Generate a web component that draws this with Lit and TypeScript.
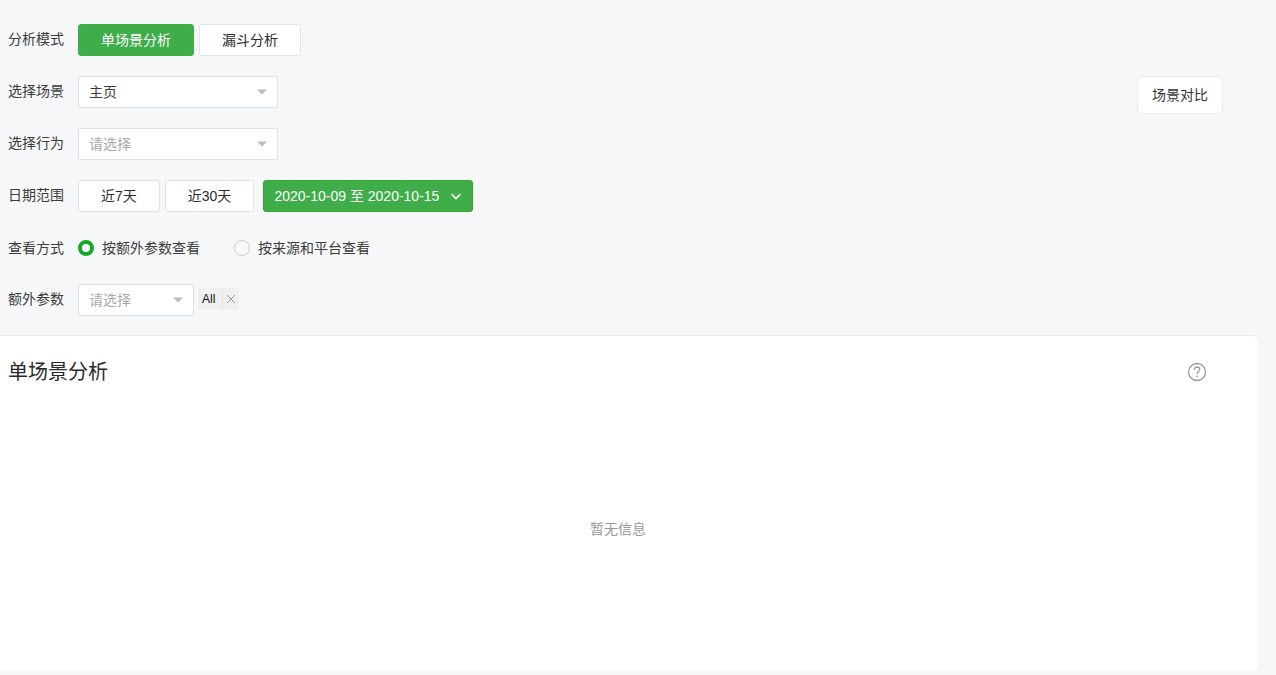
import { LitElement, html, css } from "lit";
import { customElement, property, state } from "lit/decorators.js";

@customElement("app-root")
export class AppRoot extends LitElement {
  @property({ type: String }) mode = "single";
  @state() private view = "extra";
  @state() private tags = ["All"];

  static styles = css`
    :host {
      display: block;
      box-sizing: border-box;
      min-height: 100vh;
      padding: 24px 18px 5px 0;
      background: #f5f7f9;
      color: #3c3c3c;
      font: 14px/20px "Liberation Sans", "Noto Sans CJK SC", sans-serif;
    }
    *, *::before, *::after { box-sizing: border-box; }
    button, select { font: inherit; margin: 0; }
    .top {
      display: flex;
      justify-content: space-between;
      align-items: flex-start;
      padding: 0 35px 19px 8px;
    }
    .filters { display: flex; flex-direction: column; gap: 20px; }
    .row { display: flex; align-items: center; gap: 14px; height: 32px; }
    .label { width: 56px; padding-bottom: 3px; white-space: nowrap; }
    .row.radios .label { padding-bottom: 0; }
    .group { display: flex; align-items: center; gap: 5px; }
    .group.params { gap: 4px; }
    .btn {
      height: 32px;
      padding: 0 22px;
      border: 1px solid #dfe3e8;
      border-radius: 3px;
      background: #fff;
      color: #2a2a2a;
      white-space: nowrap;
      cursor: pointer;
    }
    .btn.on { background: #3fad4a; border-color: #3fad4a; color: #fff; }
    .btn.date {
      display: flex;
      align-items: center;
      gap: 11px;
      margin-left: 4px;
      padding: 0 10px;
      border-color: #38ab2e;
    }
    .compare {
      height: 38px;
      margin-top: 52px;
      padding: 0 14px 1px;
      border: 1px solid #e8ebee;
      border-radius: 4px;
      background: #fff;
      color: #333;
      cursor: pointer;
    }
    .select { display: grid; align-items: center; width: 200px; }
    .select.small { width: 116px; }
    .select > * { grid-area: 1 / 1; }
    .select svg { justify-self: end; margin-right: 10px; pointer-events: none; }
    select {
      appearance: none;
      width: 100%;
      height: 32px;
      padding: 0 28px 0 10px;
      border: 1px solid #dce2e6;
      border-radius: 2px;
      background: #fff;
      color: #3c3c3c;
    }
    select.empty { color: #aaa; }
    .options { display: flex; gap: 34px; }
    .option { display: flex; align-items: center; gap: 8px; }
    .option input {
      appearance: none;
      width: 16px;
      height: 16px;
      margin: 0;
      border: 1px solid #ccc;
      border-radius: 50%;
      background: #f8f9fa;
    }
    .option input:checked { border: 4px solid #1aa52b; background: #fff; }
    .tag {
      display: flex;
      align-items: center;
      height: 22px;
      margin-bottom: 2px;
      padding-left: 4px;
      background: #f0f0f0;
      color: #111;
      font-size: 12px;
    }
    .tag button {
      display: flex;
      align-items: center;
      justify-content: center;
      width: 17px;
      height: 16px;
      margin-left: 7px;
      padding: 0;
      border: 0;
      border-left: 1px solid #e2e2e2;
      background: none;
      cursor: pointer;
    }
    .panel {
      display: flex;
      flex-direction: column;
      min-height: calc(100vh - 340px);
      padding: 21px 30px 20px 8px;
      border-top: 1px solid #e6e9ec;
      border-radius: 0 5px 5px 0;
      background: #fff;
    }
    .head { display: flex; align-items: center; justify-content: space-between; padding-right: 21px; }
    h1 { margin: 0; font-size: 20px; line-height: 30px; font-weight: 400; color: #2a2a2a; }
    .help { display: flex; padding: 0; border: 0; background: none; cursor: pointer; }
    .none { margin: auto; padding-top: 20px; color: #999; }
  `;

  private caret() {
    return html`<svg width="12" height="6" viewBox="0 0 12 6" aria-hidden="true"><path d="M1 .5h10L6 5.5z" fill="#bbb" /></svg>`;
  }

  private modeButton(id: string, text: string) {
    return html`<button class="btn ${this.mode === id ? "on" : ""}" @click=${() => (this.mode = id)}>${text}</button>`;
  }

  private radio(id: string, text: string) {
    return html`<label class="option"><input type="radio" name="view" .checked=${this.view === id} @change=${() => (this.view = id)} />${text}</label>`;
  }

  render() {
    return html`
      <section class="top">
        <div class="filters">
          <div class="row">
            <span class="label">分析模式</span>
            <div class="group">${this.modeButton("single", "单场景分析")}${this.modeButton("funnel", "漏斗分析")}</div>
          </div>
          <div class="row">
            <label class="label" for="scene">选择场景</label>
            <div class="select"><select id="scene"><option>主页</option></select>${this.caret()}</div>
          </div>
          <div class="row">
            <label class="label" for="action">选择行为</label>
            <div class="select"><select id="action" class="empty"><option>请选择</option></select>${this.caret()}</div>
          </div>
          <div class="row">
            <span class="label">日期范围</span>
            <div class="group">
              <button class="btn">近7天</button>
              <button class="btn">近30天</button>
              <button class="btn on date">
                2020-10-09 至 2020-10-15
                <svg width="12" height="8" viewBox="0 0 12 8" aria-hidden="true"><path d="M1.5 2 6 6.500l4.500-4.500" fill="none" stroke="#fff" stroke-width="1.600" /></svg>
              </button>
            </div>
          </div>
          <div class="row radios">
            <span class="label">查看方式</span>
            <div class="options">${this.radio("extra", "按额外参数查看")}${this.radio("source", "按来源和平台查看")}</div>
          </div>
          <div class="row">
            <label class="label" for="extra">额外参数</label>
            <div class="group params">
              <div class="select small"><select id="extra" class="empty"><option>请选择</option></select>${this.caret()}</div>
              ${this.tags.map((t) => html`<span class="tag">${t}<button aria-label="移除" @click=${() => (this.tags = this.tags.filter((x) => x !== t))}>
                <svg width="10" height="10" viewBox="0 0 10 10"><path d="M1 1l8 8M9 1 1 9" stroke="#999" fill="none" /></svg>
              </button></span>`)}
            </div>
          </div>
        </div>
        <button class="compare">场景对比</button>
      </section>
      <section class="panel">
        <div class="head">
          <h1>单场景分析</h1>
          <button class="help" aria-label="帮助">
            <svg width="20" height="20" viewBox="0 0 20 20" fill="none" stroke="#999" stroke-width="1.300">
              <circle cx="10" cy="10" r="8.500" />
              <path d="M7.300 7.900c0-1.800 1.100-2.900 2.700-2.900s2.700 1.100 2.700 2.600c0 1.900-2.600 2.200-2.600 4.400" />
              <path d="M10.100 13.500v1.500" />
            </svg>
          </button>
        </div>
        <p class="none">暂无信息</p>
      </section>
    `;
  }
}
